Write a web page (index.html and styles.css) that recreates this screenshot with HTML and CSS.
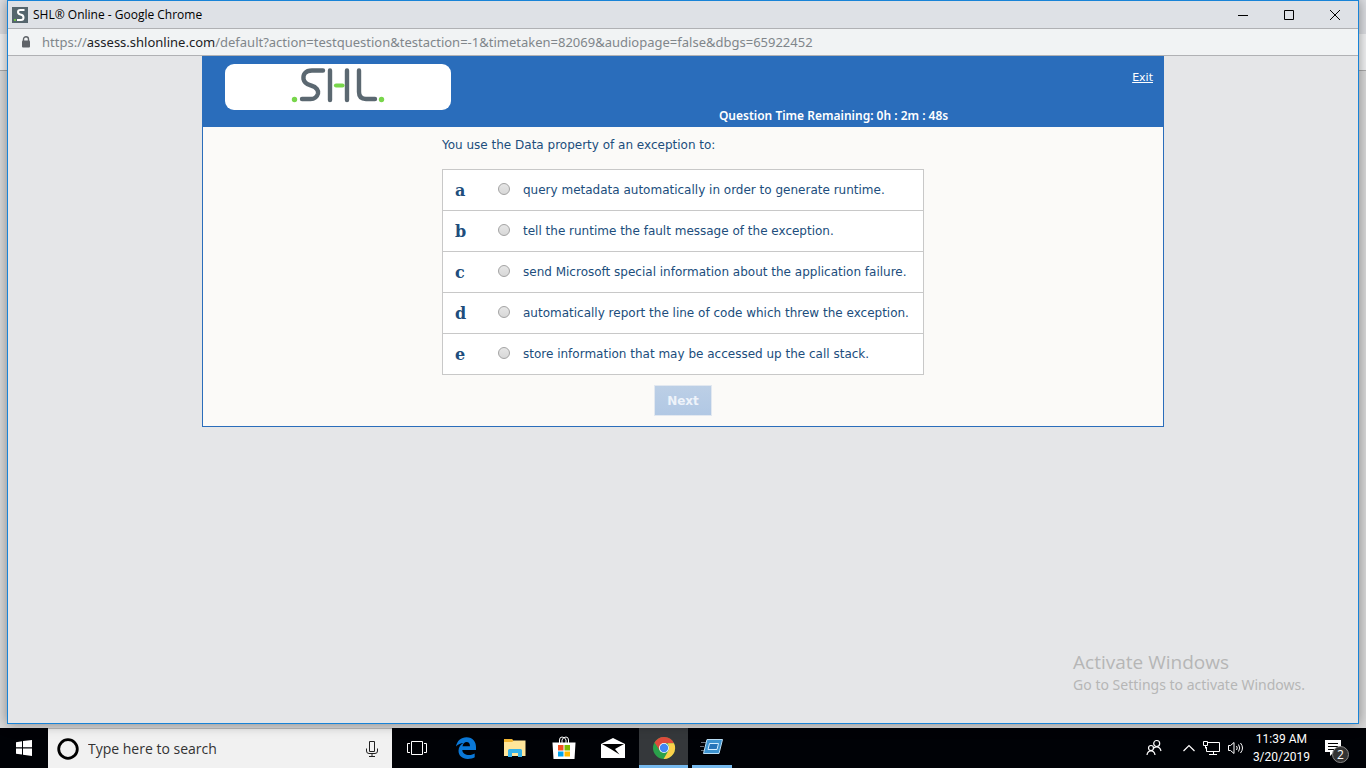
FILE: index.html
```
<!DOCTYPE html>
<html lang="en">
<head>
<meta charset="utf-8">
<title>SHL® Online</title>
<link rel="stylesheet" href="styles.css">
</head>
<body>
<div class="desktop">
  <div class="workspace">
    <div class="window">
      <header class="titlebar">
        <svg class="favicon" viewBox="0 0 16 16" aria-hidden="true"><rect width="16" height="16" fill="#55656d"/><path d="M12.500 3H8.300Q6 3 6 5Q6 7 8.500 7.500Q11.500 8 11.500 10.500Q11.500 13 9 13H5" fill="none" stroke="#fff" stroke-width="2"/><rect x="2" y="12" width="2" height="2" fill="#6fbf44"/></svg>
        <span class="window-title">SHL® Online - Google Chrome</span>
        <div class="window-controls">
          <button class="window-button" aria-label="Minimize"><svg viewBox="0 0 12 12"><path d="M1 6.500H11" /></svg></button>
          <button class="window-button" aria-label="Maximize"><svg viewBox="0 0 12 12"><path d="M1.500 1.500H10.500V10.500H1.500Z"/></svg></button>
          <button class="window-button" aria-label="Close"><svg viewBox="0 0 12 12"><path d="M1 1L11 11M11 1L1 11"/></svg></button>
        </div>
      </header>
      <div class="addressbar">
        <svg class="lock" viewBox="0 0 10 12" aria-hidden="true"><path d="M2.500 5V3.200a2.500 2.500 0 0 1 5 0V5" fill="none" stroke="#5f6368" stroke-width="1.400"/><rect x="1" y="4.500" width="8" height="7" rx="1" fill="#5f6368"/></svg>
        <span class="url">https://<span class="host">assess.shlonline.com</span>/default?action=testquestion&amp;testaction=-1&amp;timetaken=82069&amp;audiopage=false&amp;dbgs=65922452</span>
      </div>
      <main class="page">
        <section class="panel">
          <header class="panel-header">
            <div class="logo-box">
              <svg class="logo" viewBox="0 0 94 36" role="img" aria-label="SHL"><g fill="none" stroke="#5b6871" stroke-width="4.400" stroke-linecap="round"><path d="M32 3.500H21C14 3.500 12 7.500 12.500 12C13.500 17 17 17.500 20 18.500C26 20 27.500 24 27 26.500C26 30 23 32 19.500 32H11"/><path d="M39 3.500V33M56 3.500V33M68 3.500V25Q68 32 75 32H84"/></g><path d="M45 18.500H51.500" stroke="#78d64b" stroke-width="4.200" stroke-linecap="round"/><circle cx="3.500" cy="32.500" r="2.700" fill="#78d64b"/><circle cx="90.500" cy="32.500" r="2.700" fill="#78d64b"/></svg>
            </div>
            <div class="timer">Question Time Remaining: 0h : 2m : 48s</div>
            <a class="exit" href="#">Exit</a>
          </header>
          <form class="question">
            <p class="prompt">You use the Data property of an exception to:</p>
            <div class="answers">
              <label class="answer"><span class="letter">a</span><input class="choice" type="radio" name="answer"><span>query metadata automatically in order to generate runtime.</span></label>
              <label class="answer"><span class="letter">b</span><input class="choice" type="radio" name="answer"><span>tell the runtime the fault message of the exception.</span></label>
              <label class="answer"><span class="letter">c</span><input class="choice" type="radio" name="answer"><span>send Microsoft special information about the application failure.</span></label>
              <label class="answer"><span class="letter">d</span><input class="choice" type="radio" name="answer"><span>automatically report the line of code which threw the exception.</span></label>
              <label class="answer"><span class="letter">e</span><input class="choice" type="radio" name="answer"><span>store information that may be accessed up the call stack.</span></label>
            </div>
            <button class="next" type="button" disabled>Next</button>
          </form>
        </section>
      </main>
    </div>
    <div class="watermark">
      <div class="watermark-title">Activate Windows</div>
      <div class="watermark-text">Go to Settings to activate Windows.</div>
    </div>
  </div>
  <footer class="taskbar">
    <button class="task start" aria-label="Start"><svg width="16" height="16" viewBox="0 0 16 16"><path fill="#fff" d="M0 2.200L6 1.300V7.300H0ZM7 1.100L16 0V7.300H7ZM0 8.500H6V14.600L0 13.700ZM7 8.500H16V16L7 14.800Z"/></svg></button>
    <div class="search">
      <svg width="22" height="22" viewBox="0 0 22 22" aria-hidden="true"><circle cx="11" cy="11" r="9.300" fill="none" stroke="#000" stroke-width="2.800"/></svg>
      <input class="search-input" type="text" placeholder="Type here to search" aria-label="Type here to search">
      <svg width="12" height="18" viewBox="0 0 12 18" aria-hidden="true" fill="none" stroke="#222"><path d="M3.500 1.500H8.500V11.500H3.500ZM.5 8.500V11Q.5 13.500 3 13.500H9Q11.500 13.500 11.500 11V8.500M6 13.500V16.500M3 16.500H9"/></svg>
    </div>
    <button class="task" aria-label="Task View"><svg width="20" height="16" viewBox="0 0 20 16" fill="none" stroke="#fff"><path d="M4.500 1.500H15.500V14.500H4.500ZM3 3.500H.5V12.500H3M17 3.500H19.500V12.500H17"/></svg></button>
    <button class="task" aria-label="Microsoft Edge"><svg width="20" height="22" viewBox="0 0 20 22"><path fill="#0a78d7" d="M0 9.500C1 4 5 .3 10.500.3C17 .3 20 5 20 10V13H6.300C6.500 16.500 9.500 18 13 18C15.500 18 17.300 17.200 18.700 16.400V20.200C17 21.300 14.500 21.900 11.800 21.900C6 21.900 2.500 18.500 2.500 13.800C2.500 10 4.700 7.500 7.500 6C5 6.200 2 7.300 0 9.500ZM6.500 9.300H14C14 6.500 12.700 5 10.600 5C8.500 5 7 6.700 6.500 9.300Z"/></svg></button>
    <button class="task" aria-label="File Explorer"><svg width="22" height="18" viewBox="0 0 22 18"><path fill="#f2b632" d="M0 0H8L10 2H20V5H0Z"/><path fill="#ffe69a" d="M0 3H8L10 1.500H21.500V17H0Z"/><path fill="#36b3e8" d="M4 18V11.500Q4 10 5.500 10H16.500Q18 10 18 11.500V18H14V14H8V18Z"/></svg></button>
    <button class="task" aria-label="Microsoft Store"><svg width="24" height="24" viewBox="0 0 24 24"><path d="M7.500 7V4Q7.500 1 10 1Q13 1 14 4V7M10 7V4Q11 1 14 1Q16.500 1 16.500 4V7" fill="none" stroke="#fff"/><path fill="#fff" d="M.5 6.500H23.500L22.500 23H1.500Z"/><path fill="#f25022" d="M6 9H11.500V14.500H6Z"/><path fill="#7fba00" d="M12.500 9H18V14.500H12.500Z"/><path fill="#00a4ef" d="M6 15.500H11.500V20.500H6Z"/><path fill="#ffb900" d="M12.500 15.500H18V20.500H12.500Z"/></svg></button>
    <button class="task" aria-label="Mail"><svg width="24" height="20" viewBox="0 0 24 20"><path fill="#fff" d="M0 6L12 0L24 6V20H0Z"/><path fill="#000" d="M1 6H23L14 11L18.500 16.500L10.500 11.500Z"/></svg></button>
    <button class="task task-active" aria-label="Google Chrome"><svg width="24" height="24" viewBox="0 0 24 24"><circle cx="12" cy="12" r="11" fill="#2ba14b"/><path fill="#df4b3c" d="M2.500 6.500A11 11 0 0 1 22 7.200H12L7.800 14.500Z"/><path fill="#fbd04a" d="M22 7.200A11 11 0 0 1 11.600 23L16.500 14.500Q18 11 15.500 7.200Z"/><circle cx="12" cy="12" r="5" fill="#fff"/><circle cx="12" cy="12" r="4.200" fill="#4286f3"/></svg></button>
    <button class="task task-open" aria-label="Remote application"><svg width="24" height="18" viewBox="0 0 24 18"><path d="M1 4.500H6M0 8.500H4M1 12.500H5" stroke="#68717b"/><path fill="#3c93d0" stroke="#b8dcf3" d="M7 1.500H22.500L19 15.500H3.500Z"/><path fill="#2674b8" stroke="#d2edff" d="M9.500 5.500H18.500L17 11.500H8Z"/></svg></button>
    <div class="tray">
      <svg class="people" width="16" height="18" viewBox="0 0 16 18" aria-hidden="true" fill="none" stroke="#fff" stroke-width="1.200"><circle cx="10.700" cy="4.500" r="3"/><circle cx="5" cy="9" r="2.500"/><path d="M1 16Q1.500 11.800 5 11.800T9 16M8 9Q9 7.800 10.700 7.800Q14 7.800 15 12"/></svg>
      <svg width="12" height="8" viewBox="0 0 12 8" aria-hidden="true" fill="none" stroke="#fff" stroke-width="1.200"><path d="M.5 7L6 1.500L11.500 7"/></svg>
      <svg width="17" height="14" viewBox="0 0 17 14" aria-hidden="true" fill="none" stroke="#fff"><path d="M5 1.500H16.500V10.500H3.500V6M.5 .5H4.500V4.500H.5ZM2.500 4.500V7.500M10.500 10.500V13.500M6 13.500H14"/></svg>
      <svg width="17" height="14" viewBox="0 0 17 14" aria-hidden="true" fill="none" stroke="#fff"><path d="M.5 4.500H2.500L6 1.500V12.500L2.500 9.500H.5ZM8.500 5Q10 7 8.500 9M10.500 3.500Q13 7 10.500 10.500M12.500 2Q16.500 7 12.500 12"/></svg>
      <div class="clock"><span>11:39 AM</span><span>3/20/2019</span></div>
      <div class="notifications"><svg width="16" height="16" viewBox="0 0 16 16" aria-hidden="true"><path fill="#fff" d="M0 0H16V12H9L5 16V12H0Z"/><path stroke="#000" d="M3 3.500H13M3 6.500H13M3 9.500H9"/></svg><span class="badge">2</span></div>
    </div>
  </footer>
</div>
</body>
</html>
```
FILE: styles.css
```
* { box-sizing: border-box; }
body { margin: 0; font-family: "Open Sans", "Noto Sans", sans-serif; font-size: 12px; color: #000; }
button { border: 0; padding: 0; background: none; font: inherit; }
svg { display: block; flex: none; }

.desktop { height: 100vh; display: flex; flex-direction: column; overflow: hidden; }
.workspace {
  position: relative; flex: 1; min-height: 0; display: flex; padding: 0 7px 4px;
  background: linear-gradient(#dcdee2 0 34px, #f2f3f4 34px 70px, #aaa 70px 71px, #dadada 71px);
}
.window {
  flex: 1; min-width: 0; display: flex; flex-direction: column;
  border: 1px solid #1883d7; background: #e5e6e8; box-shadow: 0 0 12px rgba(0, 0, 0, .4);
}
.titlebar { height: 28px; display: flex; align-items: center; background: #dee1e6; border-bottom: 1px solid #b0b1b4; padding-left: 4px; }
.favicon { width: 16px; height: 16px; }
.window-title { margin-left: 5px; }
.window-controls { display: flex; margin-left: auto; align-self: stretch; }
.window-button { width: 46px; display: flex; align-items: center; justify-content: center; }
.window-button svg { width: 12px; height: 12px; fill: none; stroke: #000; }
.addressbar { height: 27px; display: flex; align-items: center; gap: 11px; padding-left: 13px; background: #f1f3f4; border-bottom: 1px solid #b0b1b4; }
.lock { width: 10px; height: 12px; }
.url { font-family: "Noto Sans", sans-serif; font-size: 13px; color: #80868b; white-space: nowrap; }
.host { color: #202124; }

.page { flex: 1; font-family: "DejaVu Sans", sans-serif; color: #204d7c; }
.panel { max-width: 962px; margin: 0 auto; border: 1px solid #2a6dbb; border-top: 0; background: #fbfaf8; }
.panel-header { display: flex; justify-content: space-between; height: 71px; padding: 8px 10px 0 22px; background: #2a6dbb; color: #fff; font-size: 11px; }
.logo-box { width: 226px; height: 46px; display: flex; justify-content: center; padding-top: 3px; background: #fff; border-radius: 9px; }
.logo { width: 94px; height: 36px; }
.timer { align-self: flex-end; margin-left: 84px; padding-bottom: 3px; font-family: "Noto Sans", sans-serif; font-size: 12px; font-weight: 600; }
.exit { color: #fff; padding-top: 7px; }
.question { display: flex; flex-direction: column; align-items: center; padding: 10px 20px; font-size: 12px; line-height: 16px; }
.prompt { width: 482px; margin: 0 0 16px; }
.answers { width: 482px; border: 1px solid #c8c8c8; background: #fff; }
.answer { height: 41px; display: flex; align-items: center; }
.answer + .answer { border-top: 1px solid #c8c8c8; }
.answer:first-child { height: 40px; }
.letter { width: 42px; padding: 2px 0 0 12px; font-family: "DejaVu Serif", serif; font-size: 16px; font-weight: 700; }
.choice { appearance: none; width: 12px; height: 12px; margin: 0 13px 2px; border: 1px solid #a3a3a3; border-radius: 50%; background: linear-gradient(#e6e6e6, #d8d8d8); }
.next { width: 58px; height: 31px; margin-top: 10px; border: 1px solid #e2e8f0; background: linear-gradient(#bccfe6, #b1c8e4); color: #eef3fa; font-size: 12px; font-weight: 700; }

.watermark { position: absolute; right: 61px; bottom: 33px; color: #b6b6b6; }
.watermark-title { font-size: 19px; line-height: 26px; }
.watermark-text { font-family: "Noto Sans", sans-serif; font-size: 14px; line-height: 20px; }

.taskbar { height: 40px; flex: none; display: flex; background: #000206; color: #fff; }
.task { width: 49px; display: flex; align-items: center; justify-content: center; }
.start { width: 48px; }
.task-active { background: #35383b; border-bottom: 3px solid #76b9ed; padding-top: 3px; margin-left: 2px; }
.task-open { border-bottom: 3px solid #76b9ed; width: 40px; margin-left: 4px; }
.search { width: 344px; display: flex; align-items: center; gap: 9px; padding: 0 14px 0 9px; background: #f1f1f1; border-top: 1px solid #bbb; }
.search-input { flex: 1; min-width: 0; border: 0; padding: 0; background: none; font: inherit; font-size: 14px; }
.search-input::placeholder { color: #333; opacity: 1; }
.tray { margin-left: auto; display: flex; align-items: center; gap: 8px; padding-right: 17px; }
.people { margin-right: 13px; }
.clock { display: flex; flex-direction: column; align-items: center; font-family: Roboto, sans-serif; line-height: 18px; }
.notifications { position: relative; width: 24px; height: 16px; margin-left: 7px; }
.badge { position: absolute; left: 7px; top: 6px; width: 17px; height: 17px; border: 1px solid #888; border-radius: 50%; background: #333; font-size: 12px; line-height: 15px; text-align: center; }
```
